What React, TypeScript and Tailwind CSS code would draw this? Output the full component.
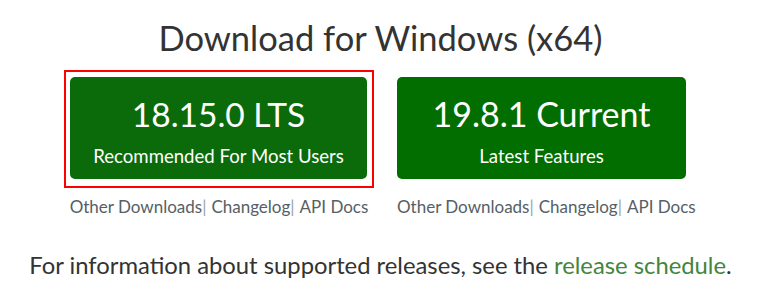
import React from 'react'

const links = ['Other Downloads', 'Changelog', 'API Docs']

const LinkRow = () => {
  return (
    <div className="mt-[9px] flex justify-center text-[17px] leading-[20px] text-[#556066]">
      {links.map((l, i) => (
        <span key={l} className="flex">
          <a href="#" className="hover:underline">{l}</a>
          {i < links.length - 1 && <span className="mr-[5px] text-[#9aa3a6]">|</span>}
        </span>
      ))}
    </div>
  )
}

const App = () => {
  return (
    <main
      className="w-[761px] h-[294px] bg-white text-[#333]"
      style={{ fontFamily: 'Lato, "Open Sans", sans-serif' }}
    >
      <h1 className="pt-[16px] text-center text-[34.5px] leading-[44px] font-normal">
        Download for Windows (x64)
      </h1>

      <div className="mt-[10px] flex pl-[64px] gap-[23px]">
        <div className="flex flex-col">
          <div className="border-2 border-[#ff0000] pl-[4px] pr-[5px] pt-[5px] pb-[7px]">
            <a
              href="#"
              className="flex h-[102px] w-[297px] flex-col items-center justify-center rounded-[5px] bg-[#0b6b0b] text-white"
            >
              <span className="mt-[5px] text-[33.5px] leading-[40px]">18.15.0 LTS</span>
              <span className="mt-[11px] text-[18.6px] leading-[22px]">Recommended For Most Users</span>
            </a>
          </div>
          <LinkRow />
        </div>

        <div className="flex flex-col">
          <a
            href="#"
            className="mt-[7px] mb-[9px] flex h-[102px] w-[289px] flex-col items-center justify-center rounded-[5px] bg-[#026e00] text-white"
          >
            <span className="mt-[5px] text-[34px] leading-[40px]">19.8.1 Current</span>
            <span className="mt-[11px] text-[18.6px] leading-[22px]">Latest Features</span>
          </a>
          <LinkRow />
        </div>
      </div>

      <p className="mt-[34px] text-center text-[23.8px] leading-[28px]">
        For information about supported releases, see the{' '}
        <a href="#" className="text-[#43853d]">release schedule</a>.
      </p>
    </main>
  )
}

export default App
